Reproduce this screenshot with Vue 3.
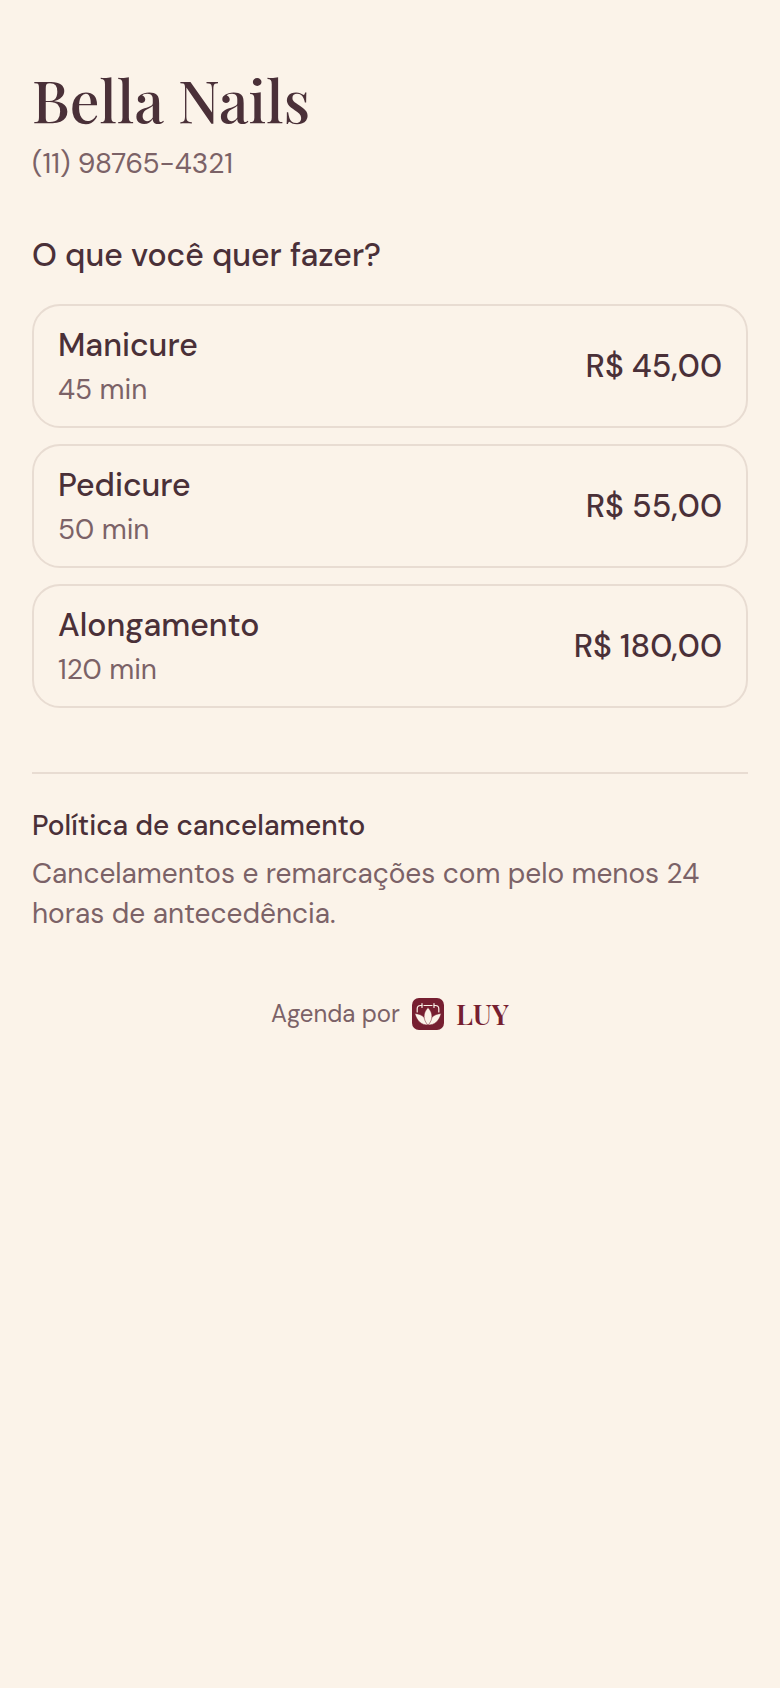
<script setup>
import { ref } from 'vue'

const services = ref([
  { id: 1, name: 'Manicure', duration: 45, price: 45 },
  { id: 2, name: 'Pedicure', duration: 50, price: 55 },
  { id: 3, name: 'Alongamento', duration: 120, price: 180 }
])

const selected = ref(null)

const formatPrice = (value) => 'R$ ' + value.toFixed(2).replace('.', ',')

const handleSelect = (service) => {
  selected.value = service.id
}
</script>

<template>
  <div class="page">
    <header>
      <h1>Bella Nails</h1>
      <p class="phone">(11) 98765-4321</p>
    </header>

    <main>
      <h2>O que você quer fazer?</h2>
      <ul class="services">
        <li v-for="service in services" :key="service.id">
          <button type="button" class="service" :aria-pressed="selected === service.id" @click="handleSelect(service)">
            <span class="info">
              <span class="name">{{ service.name }}</span>
              <span class="duration">{{ service.duration }} min</span>
            </span>
            <span class="price">{{ formatPrice(service.price) }}</span>
          </button>
        </li>
      </ul>

      <section class="policy">
        <h3>Política de cancelamento</h3>
        <p>Cancelamentos e remarcações com pelo menos 24 horas de antecedência.</p>
      </section>
    </main>

    <footer>
      <span>Agenda por</span>
      <a href="#" class="brand">
        <!-- calendar outline with a lotus in front -->
        <svg class="logo" viewBox="0 0 32 32" aria-hidden="true">
          <rect width="32" height="32" rx="7" fill="#761f31" />
          <g fill="none" stroke="#fbf3e9" stroke-width="1.2" stroke-linecap="round">
            <path d="M5.200 14v-3.200q0-3.300 3.300-3.300h1.300M12 7.500h8M22.200 7.500h1.300q3.300 0 3.300 3.300V14" />
            <path d="M10 5.500v4M22 5.500v4" />
          </g>
          <g fill="#fbf3e9" stroke="#761f31" stroke-width="0.500">
            <path d="M16 27C9.500 27.200 5 23 2.800 15.500c6.200.3 11.700 4 13.200 11.500z" />
            <path d="M16 27c6.500.2 11-4 13.200-11.500C23 15.800 17.500 19.500 16 27z" />
            <path d="M16 27.200c-5.200-5.700-5.200-12 0-17.700 5.200 5.700 5.200 12 0 17.700z" />
          </g>
        </svg>
        <span class="wordmark">LUY</span>
      </a>
    </footer>
  </div>
</template>

<style>
body {
  margin: 0;
  background: #fbf3e9;
}
</style>

<style scoped>
.page {
  padding: 64px 32px;
  color: #4a3038;
  font-family: 'DM Sans', Inter, sans-serif;
  font-size: 28px;
  line-height: 40px;
}

h1,
h2,
h3,
p,
ul {
  margin: 0;
  padding: 0;
}

h1 {
  margin-bottom: 10px;
  font-family: 'Playfair Display', 'Liberation Serif', serif;
  font-size: 59px;
  font-weight: 500;
  line-height: 70px;
}

.phone,
.duration,
.policy p,
footer {
  color: #7b6267;
}

h2 {
  margin: 48px 0 26px;
  font-size: 32px;
  font-weight: 500;
  line-height: 46px;
}

.services {
  display: flex;
  flex-direction: column;
  gap: 16px;
  list-style: none;
}

.service {
  display: flex;
  justify-content: space-between;
  align-items: center;
  width: 100%;
  padding: 16px 24px;
  border: 2px solid #e8dcd2;
  border-radius: 28px;
  background: none;
  color: inherit;
  font: inherit;
  text-align: left;
  cursor: pointer;
}

.info {
  display: flex;
  flex-direction: column;
  gap: 2px;
}

.name,
.price {
  font-size: 32px;
  font-weight: 500;
  line-height: 46px;
}

.policy {
  margin-top: 64px;
  padding-top: 32px;
  border-top: 2px solid #e8dcd2;
}

h3 {
  margin-bottom: 8px;
  font-size: 28px;
  font-weight: 500;
}

footer {
  display: flex;
  justify-content: center;
  align-items: center;
  gap: 12px;
  margin-top: 64px;
  font-size: 24px;
  line-height: 32px;
}

.brand {
  display: flex;
  align-items: center;
  gap: 12px;
  color: #761f31;
  text-decoration: none;
}

.logo {
  width: 32px;
  height: 32px;
}

.wordmark {
  font-family: 'Playfair Display', 'Liberation Serif', serif;
  font-size: 28px;
  font-weight: 600;
}
</style>
